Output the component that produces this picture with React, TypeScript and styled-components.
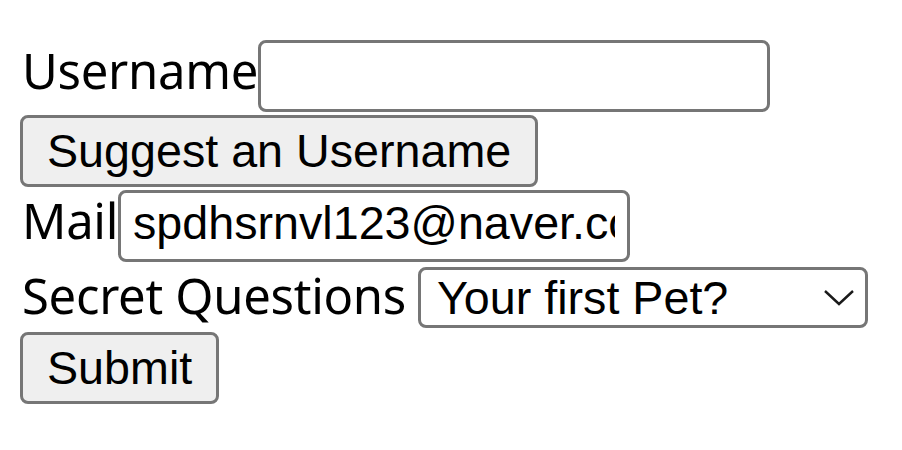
import * as React from 'react';
import styled, { createGlobalStyle } from 'styled-components';

const GlobalStyle = createGlobalStyle`
  html, body {
    margin: 0;
    padding: 0;
    background: #ffffff;
  }
`;

export default function App() {
  return (
    <>
      <GlobalStyle />
      <Form onSubmit={(e) => e.preventDefault()}>
        <Row $top={40}>
          <Label>Username</Label>
          <TextInput type="text" />
        </Row>
        <Row $top={3}>
          <Button type="button">Suggest an Username</Button>
        </Row>
        <Row $top={3}>
          <Label>Mail</Label>
          <TextInput type="email" defaultValue="spdhsrnvl123@naver.com" />
        </Row>
        <Row $top={5}>
          <Label>Secret Questions</Label>
          <SelectWrap>
            <Select defaultValue="pet">
              <option value="pet">Your first Pet?</option>
              <option value="school">Your first School?</option>
            </Select>
            <Chevron width="32" height="18" viewBox="0 0 32 18">
              <path d="M2 2 L16 15 L30 2" fill="none" stroke="#1a1a1a" strokeWidth="2.4" />
            </Chevron>
          </SelectWrap>
        </Row>
        <Row $top={4}>
          <Button type="submit">Submit</Button>
        </Row>
      </Form>
    </>
  );
}

const Form = styled.form`
  display: flex;
  flex-direction: column;
  align-items: flex-start;
  padding: 0 20px;
`;

const Row = styled.div<{ $top: number }>`
  display: flex;
  align-items: baseline;
  margin-top: ${(p) => p.$top}px;
`;

const Label = styled.label`
  font-family: 'Noto Sans', 'Noto Sans CJK KR', sans-serif;
  font-size: 49px;
  line-height: 1;
  color: #000000;
  padding-left: 2px;
  letter-spacing: -0.3px;
`;

const TextInput = styled.input`
  box-sizing: border-box;
  width: 512px;
  height: 72px;
  padding: 0 12px 6px;
  border: 3px solid #767676;
  border-radius: 8px;
  background: #ffffff;
  font-family: 'Liberation Sans', Arial, sans-serif;
  font-size: 46.67px;
  color: #000000;
  outline: none;
`;

const Button = styled.button`
  box-sizing: border-box;
  height: 72px;
  padding: 0 24px;
  border: 3px solid #767676;
  border-radius: 8px;
  background: #efefef;
  font-family: 'Liberation Sans', Arial, sans-serif;
  font-size: 46.67px;
  color: #000000;
  cursor: pointer;
`;

const SelectWrap = styled.div`
  position: relative;
  display: inline-flex;
  margin-left: 12px;
`;

const Select = styled.select`
  box-sizing: border-box;
  appearance: none;
  width: 450px;
  height: 61px;
  padding: 0 16px;
  border: 3px solid #767676;
  border-radius: 8px;
  background: #ffffff;
  font-family: 'Liberation Sans', Arial, sans-serif;
  font-size: 46.67px;
  color: #000000;
  outline: none;
`;

const Chevron = styled.svg`
  position: absolute;
  right: 13px;
  top: 22px;
  pointer-events: none;
`;
